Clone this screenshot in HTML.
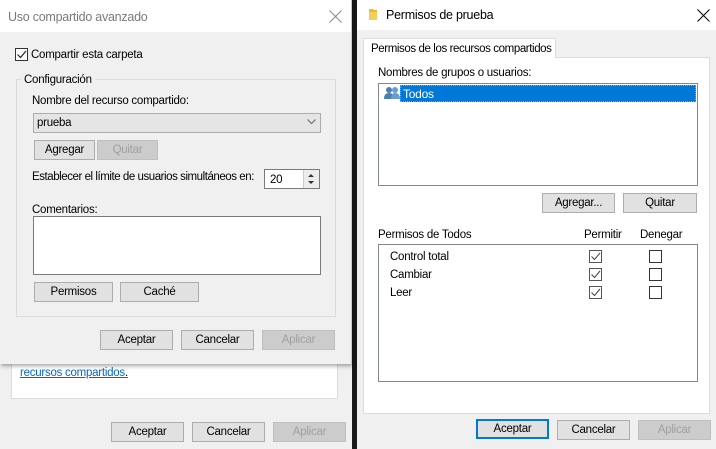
<!DOCTYPE html><html><head><meta charset="utf-8"><style>
*{box-sizing:border-box;margin:0;padding:0;white-space:nowrap}
body{width:716px;height:449px;overflow:hidden;background:#f0f0f0;font-family:"Liberation Sans",sans-serif;font-size:11.5px;letter-spacing:-0.25px;line-height:16px;color:#000;position:relative}
.a{position:absolute}
.btn{position:absolute;background:#e1e1e1;border:1px solid #adadad;text-align:center;line-height:19px;height:20px}
.dis{color:#a0a0a0;background:#cccccc;border-color:#bfbfbf}
.cb{position:absolute;width:13px;height:13px;border:1px solid #333;background:#fff}
.cb.g{border-color:#555}
</style></head><body>
<div class="a" style="left:0;top:300px;width:352px;height:149px;background:#f0f0f0"></div>
<div class="a" style="left:11px;top:330px;width:327px;height:69px;background:#fff;border:1px solid #dcdcdc"></div>
<div class="a" style="left:20px;top:365px;color:#0066cc;text-decoration:underline">recursos compartidos<span style="color:#000;text-decoration:none">.</span></div>
<div class="a" style="left:210px;top:362px;width:82px;height:2px;background:#3a6fb5"></div>
<div class="btn" style="left:111px;top:422px;width:73px">Aceptar</div>
<div class="btn" style="left:192px;top:422px;width:73px">Cancelar</div>
<div class="btn dis" style="left:273px;top:422px;width:73px">Aplicar</div>
<div class="a" style="left:352px;top:0;width:5px;height:449px;background:#1a1a1a"></div>

<div class="a" style="left:0;top:0;width:352px;height:364px;background:#f0f0f0;box-shadow:1px 2px 4px rgba(0,0,0,.35);border-right:1px solid #c8c8c8">
<div class="a" style="left:0;top:0;width:351px;height:32px;background:#fff"></div>
<div class="a" style="left:8px;top:9px;font-size:12.5px;color:#7a7a7a">Uso compartido avanzado</div>
<svg class="a" style="left:329px;top:10px" width="13" height="13"><path d="M0.5 0.5L12.5 12.5M12.5 0.5L0.5 12.5" stroke="#888" stroke-width="1"/></svg>
<div class="cb" style="left:15px;top:48px"><svg width="11" height="11" style="position:absolute;left:0;top:0"><path d="M1.5 5.5L4.5 8.5L10 2" stroke="#222" fill="none" stroke-width="1.2"/></svg></div>
<div class="a" style="left:31px;top:47px">Compartir esta carpeta</div>
<div class="a" style="left:16px;top:79px;width:320px;height:238px;border:1px solid #dcdcdc"></div>
<div class="a" style="left:21px;top:72px;background:#f0f0f0;padding:0 3px">Configuración</div>
<div class="a" style="left:32px;top:93px">Nombre del recurso compartido:</div>
<div class="a" style="left:33px;top:113px;width:288px;height:20px;background:#e5e5e5;border:1px solid #adadad;padding:1px 3px">prueba</div>
<svg class="a" style="left:307px;top:119px" width="9" height="6"><path d="M0.5 0.5L4.5 4.5L8.5 0.5" stroke="#666" fill="none"/></svg>
<div class="btn" style="left:34px;top:140px;width:61px">Agregar</div>
<div class="btn dis" style="left:97px;top:140px;width:61px">Quitar</div>
<div class="a" style="left:32px;top:169px;letter-spacing:-0.45px">Establecer el límite de usuarios simultáneos en:</div>
<div class="a" style="left:264px;top:169px;width:56px;height:20px;background:#fff;border:1px solid #7a7a7a;padding:2px 5px">20</div>
<div class="a" style="left:303px;top:170px;width:16px;height:18px;background:#ececec;border-left:1px solid #ccc"></div>
<svg class="a" style="left:306px;top:172px" width="10" height="14"><path d="M2 5L5 2L8 5Z M2 9L5 12L8 9Z" fill="#333"/></svg>
<div class="a" style="left:32px;top:202px">Comentarios:</div>
<div class="a" style="left:33px;top:216px;width:288px;height:59px;background:#fff;border:1px solid #7a7a7a"></div>
<div class="btn" style="left:34px;top:282px;width:79px">Permisos</div>
<div class="btn" style="left:120px;top:282px;width:79px">Caché</div>
<div class="btn" style="left:100px;top:330px;width:73px">Aceptar</div>
<div class="btn" style="left:181px;top:330px;width:73px">Cancelar</div>
<div class="btn dis" style="left:262px;top:330px;width:73px">Aplicar</div>
</div>

<div class="a" style="left:357px;top:0;width:359px;height:449px;background:#f0f0f0">
<div class="a" style="left:0;top:0;width:359px;height:30px;background:#fff"></div>
<svg class="a" style="left:12px;top:8px" width="9" height="13"><path d="M0 1H4L5 2H8V12H0Z" fill="#e8b936"/><path d="M0 4H8V12H0Z" fill="#f6cf57"/></svg>
<div class="a" style="left:29px;top:7px;font-size:12.5px">Permisos de prueba</div>
<svg class="a" style="left:340px;top:9px" width="13" height="13"><path d="M0.5 0.5L12.5 12.5M12.5 0.5L0.5 12.5" stroke="#000" stroke-width="1"/></svg>
<div class="a" style="left:6px;top:57px;width:347px;height:357px;background:#fff;border:1px solid #dcdcdc"></div>
<div class="a" style="left:6px;top:38px;width:193px;height:20px;background:#fff;border:1px solid #dcdcdc;border-bottom:none;padding:2px 0 0 7px;letter-spacing:-0.4px">Permisos de los recursos compartidos</div>
<div class="a" style="left:21px;top:65px">Nombres de grupos o usuarios:</div>
<div class="a" style="left:21px;top:83px;width:320px;height:103px;border:1px solid #828790;background:#fff"></div>
<svg class="a" style="left:27px;top:86px" width="16" height="14"><circle cx="5" cy="4" r="3" fill="#4a7fb5"/><circle cx="11" cy="4" r="3" fill="#6b9bd1"/><path d="M0 13Q0 7 5 7Q10 7 10 13Z" fill="#4a7fb5"/><path d="M7 13Q7 7 11 7Q16 7 16 13Z" fill="#6b9bd1"/></svg>
<div class="a" style="left:43px;top:85px;width:296px;height:17px;background:#0078d7;color:#fff;padding:0 2px;border:1px dotted #99c;font-size:12px">Todos</div>
<div class="btn" style="left:185px;top:193px;width:73px">Agregar...</div>
<div class="btn" style="left:266px;top:193px;width:74px">Quitar</div>
<div class="a" style="left:21px;top:227px">Permisos de Todos</div>
<div class="a" style="left:227px;top:227px">Permitir</div>
<div class="a" style="left:283px;top:227px">Denegar</div>
<div class="a" style="left:21px;top:244px;width:320px;height:138px;border:1px solid #828790;background:#fff"></div>
<div class="a" style="left:33px;top:249px">Control total</div>
<div class="a" style="left:33px;top:267px">Cambiar</div>
<div class="a" style="left:33px;top:285px">Leer</div>
<div class="cb g" style="left:232px;top:250px"><svg width="11" height="11" style="position:absolute"><path d="M1.5 5.5L4.5 8.5L10 2" stroke="#444" fill="none"/></svg></div>
<div class="cb g" style="left:232px;top:268px"><svg width="11" height="11" style="position:absolute"><path d="M1.5 5.5L4.5 8.5L10 2" stroke="#444" fill="none"/></svg></div>
<div class="cb g" style="left:232px;top:286px"><svg width="11" height="11" style="position:absolute"><path d="M1.5 5.5L4.5 8.5L10 2" stroke="#444" fill="none"/></svg></div>
<div class="cb" style="left:292px;top:250px"></div>
<div class="cb" style="left:292px;top:268px"></div>
<div class="cb" style="left:292px;top:286px"></div>
<div class="btn" style="left:119px;top:419px;width:73px;border:2px solid #0078d7;line-height:17px">Aceptar</div>
<div class="btn" style="left:200px;top:420px;width:73px">Cancelar</div>
<div class="btn dis" style="left:281px;top:420px;width:73px">Aplicar</div>
</div>
</body></html>
